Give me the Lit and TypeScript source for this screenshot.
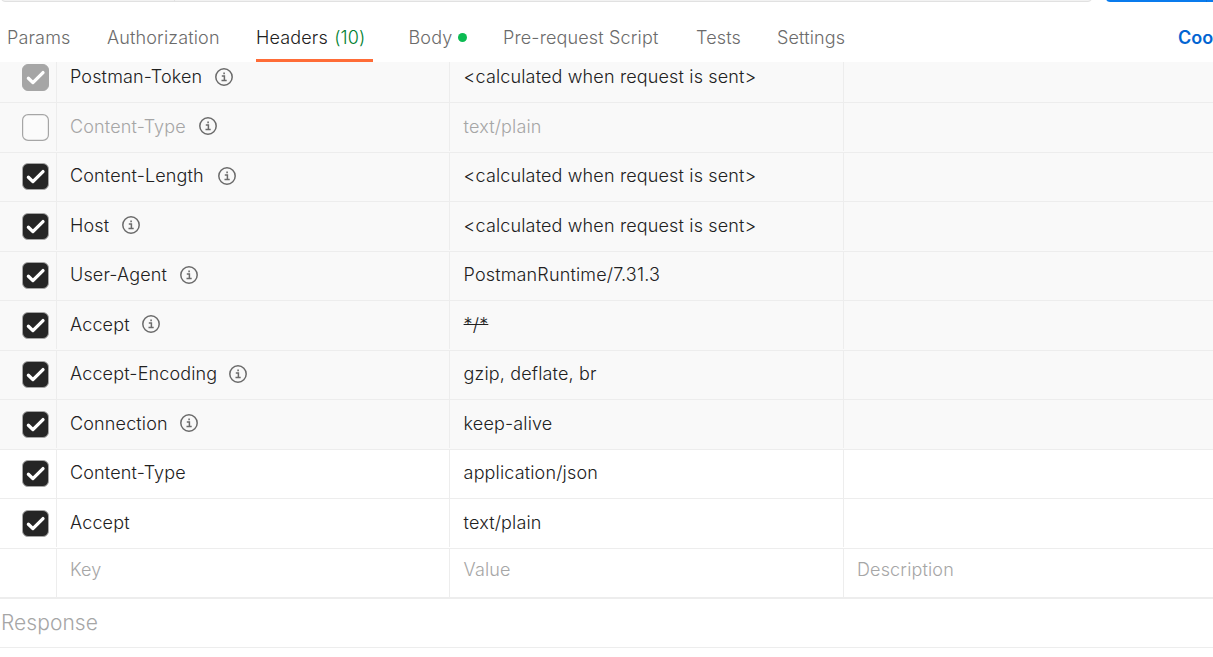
import { LitElement, html, css, svg, nothing } from "lit";
import { customElement } from "lit/decorators.js";
import { classMap } from "lit/directives/class-map.js";
import { styleMap } from "lit/directives/style-map.js";

interface HeaderRow {
  key: string;
  value: string;
  keyWidth: number;
  state: "on" | "off" | "locked";
  auto?: boolean;
  struck?: boolean;
}

const CALC = "<calculated when request is sent>";

const ROWS: HeaderRow[] = [
  { key: "Postman-Token", value: CALC, keyWidth: 133, state: "locked", auto: true },
  { key: "Content-Type", value: "text/plain", keyWidth: 117, state: "off", auto: true },
  { key: "Content-Length", value: CALC, keyWidth: 136, state: "on", auto: true },
  { key: "Host", value: CALC, keyWidth: 40, state: "on", auto: true },
  { key: "User-Agent", value: "PostmanRuntime/7.31.3", keyWidth: 98, state: "on", auto: true },
  { key: "Accept", value: "*/*", keyWidth: 60, state: "on", auto: true, struck: true },
  { key: "Accept-Encoding", value: "gzip, deflate, br", keyWidth: 147, state: "on", auto: true },
  { key: "Connection", value: "keep-alive", keyWidth: 98, state: "on", auto: true },
  { key: "Content-Type", value: "application/json", keyWidth: 117, state: "on" },
  { key: "Accept", value: "text/plain", keyWidth: 60, state: "on" },
];

const tick = svg`<path d="M6.4 14.2 L10.9 18.6 L21 8.6" fill="none" stroke="#fff" stroke-width="3.3" stroke-linecap="round" stroke-linejoin="round"/>`;

@customElement("app-root")
export class AppRoot extends LitElement {
  static styles = css`
    :host {
      display: flex;
      flex-direction: column;
      width: 100%;
      height: 657px;
      overflow: hidden;
      background: #fff;
      color: #212121;
      font: 355 18px/22px Inter, sans-serif;
      letter-spacing: 0.15px;
      white-space: nowrap;
    }
    * { box-sizing: border-box; }
    .bar {
      display: flex;
      height: 2px;
      flex: none;
      align-items: flex-end;
      overflow: hidden;
    }
    .url {
      display: flex;
      flex: none;
      width: 1091px;
      height: 8px;
      margin-left: 1px;
      background: #f2f2f2;
      border: 1px solid #e1e1e1;
      border-radius: 4px;
    }
    .method { width: 173px; border-right: 1px solid #e1e1e1; }
    .send {
      width: 130px;
      height: 8px;
      flex: none;
      margin-left: 14px;
      background: #097bed;
      border-radius: 4px;
    }
    .split { width: 101px; height: 8px; border-right: 1px solid #0a6fd6; }
    .tabs {
      display: flex;
      flex: none;
      height: 60px;
      color: #6b6b6b;
    }
    .tab {
      flex: none;
      height: 60px;
      padding-top: 25px;
    }
    .active {
      color: #212121;
      border-bottom: 3px solid #ff6c37;
    }
    .count { color: #007f31; margin-left: 1px; }
    .dot {
      display: inline-block;
      width: 9px;
      height: 9px;
      border-radius: 50%;
      background: #0cbb52;
      margin-left: 5.5px;
      vertical-align: 2px;
    }
    .t1 { width: 100px; margin-left: 7px; }
    .t2 { width: 149px; }
    .t3 { width: 117px; margin-right: 35.5px; }
    .t4 { width: 94.5px; }
    .t5 { width: 193px; }
    .t6 { width: 81px; }
    .t7 { width: 401px; }
    .cookies { color: #0265d2; font-weight: 600; letter-spacing: 0; }
    .row {
      display: grid;
      grid-template-columns: 57px 393px 394px 1fr;
      flex: none;
      height: 49px;
      border-bottom: 1px solid #ededed;
    }
    .row.tall { height: 50px; }
    .row.first { height: 41px; }
    .row.auto { background: #f9f9f9; }
    .cell {
      display: flex;
      align-items: flex-end;
      min-width: 0;
      padding: 0 0 14px 13px;
      border-right: 1px solid #ededed;
    }
    .tall .cell { margin-bottom: 1px; padding-bottom: 13px; }
    .cell.last { border-right: 0; }
    .cell.check { padding: 0 0 11px 22px; }
    .tall .cell.check { padding-bottom: 10px; }
    .cell.value { padding-left: 13.6px; }
    .muted { color: #a6a6a6; }
    .struck { text-decoration: line-through; }
    .box { display: block; width: 27px; height: 27px; }
    .key { flex: none; }
    .info { display: block; flex: none; width: 20px; height: 20px; margin: 0 0 1px 11px; }
    .tall .info { margin-bottom: 2px; }
    .row.entry { height: 50px; border-bottom: 2px solid #ededed; color: #a6a6a6; }
    .entry .cell { padding-bottom: 16px; }
    .response {
      flex: none;
      height: 49px;
      padding: 11px 0 0 1px;
      border-bottom: 1px solid #ededed;
      color: #a6a6a6;
      font-size: 21px;
      line-height: 26px;
      letter-spacing: 0.06px;
    }
  `;

  private box(state: HeaderRow["state"]) {
    if (state === "off") {
      return html`<svg class="box" viewBox="0 0 27 27"><rect x=".6" y=".6" width="25.8" height="25.8" rx="5.5" fill="#fff" fill-opacity=".3" stroke="#a6a6a6" stroke-width="1.2"/></svg>`;
    }
    const fill = state === "locked" ? "#a6a6a6" : "#262626";
    return html`<svg class="box" viewBox="0 0 27 27"><rect x=".5" y=".5" width="26" height="26" rx="5.5" fill=${fill} stroke="#a6a6a6"/>${tick}</svg>`;
  }

  private info() {
    return html`<svg class="info" viewBox="0 0 20 20" fill="none" stroke="#6b6b6b" stroke-width="1.5"><circle cx="10" cy="10" r="8.2"/><path d="M7.8 9h2.6v4.5M7.5 13.5h5.2"/><path d="M9.3 6.3h1.6" stroke-width="1.7"/></svg>`;
  }

  private row(r: HeaderRow, i: number) {
    const text = { muted: r.state === "off" };
    return html`<div class=${classMap({ row: true, first: i === 0, tall: i % 2 === 1, auto: !!r.auto })}>
      <div class="cell check">${this.box(r.state)}</div>
      <div class="cell"><span class=${classMap({ key: true, ...text })} style=${styleMap({ width: `${r.keyWidth}px` })}>${r.key}</span>${r.auto ? this.info() : nothing}</div>
      <div class="cell value"><span class=${classMap({ ...text, struck: !!r.struck })}>${r.value}</span></div>
      <div class="cell last"></div>
    </div>`;
  }

  render() {
    return html`
      <div class="bar">
        <div class="url"><div class="method"></div></div>
        <div class="send"><div class="split"></div></div>
      </div>
      <div class="tabs">
        <div class="tab t1">Params</div>
        <div class="tab t2">Authorization</div>
        <div class="tab t3 active">Headers <span class="count">(10)</span></div>
        <div class="tab t4">Body<span class="dot"></span></div>
        <div class="tab t5">Pre-request Script</div>
        <div class="tab t6">Tests</div>
        <div class="tab t7">Settings</div>
        <div class="tab cookies">Cookies</div>
      </div>
      ${ROWS.map((r, i) => this.row(r, i))}
      <div class="row entry">
        <div class="cell"></div>
        <div class="cell">Key</div>
        <div class="cell value">Value</div>
        <div class="cell last">Description</div>
      </div>
      <div class="response">Response</div>
    `;
  }
}
